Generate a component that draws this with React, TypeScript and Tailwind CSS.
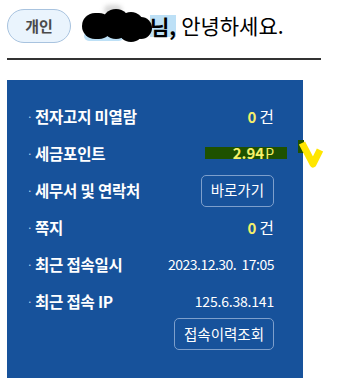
import React from 'react';

const font = { fontFamily: '"Noto Sans CJK KR", "Noto Sans", sans-serif' };

function Row({ label, children }: { label: string; children?: React.ReactNode }) {
  return (
    <div className="flex h-[37px] items-center justify-between">
      <div className="flex items-center">
        <span className="w-[8px] text-[10px] text-[#c9d6ea]">·</span>
        <span className="text-[15.5px] font-bold tracking-[-0.2px] text-white">{label}</span>
      </div>
      {children}
    </div>
  );
}

function Count({ n }: { n: string }) {
  return (
    <div className="flex items-baseline gap-[3px]">
      <span className="text-[15px] font-bold text-[#f5f06a]">{n}</span>
      <span className="text-[16px] text-white">건</span>
    </div>
  );
}

function Btn({ children }: { children: React.ReactNode }) {
  return (
    <button className="h-[32px] rounded-[5px] border border-[#7d9fcc] px-[9px] text-[14.5px] leading-none text-white">
      {children}
    </button>
  );
}

export default function App() {
  return (
    <div className="relative h-[388px] w-[351px] overflow-hidden bg-white" style={font}>
      <div className="flex items-center gap-[11px] pl-[7px] pt-[9px]">
        <div className="flex h-[34px] w-[64px] items-center justify-center rounded-full border border-[#a8c3df] bg-[#eaf4fd] text-[15px] font-bold text-[#4b4b4b]">
          개인
        </div>
        <div className="flex items-center text-[21px] text-black">
          <span className="relative inline-block h-[30px] w-[68px]">
            <span className="absolute left-[22px] top-[-6px] h-[10px] w-[18px] rounded-full bg-[#d8d8d8] blur-[2px]" />
            <span className="absolute left-[2px] top-[20px] h-[10px] w-[40px] rounded-full bg-[#bde0f6]" />
            <span className="absolute left-0 top-[2px] h-[26px] w-[30px] rounded-full bg-black" />
            <span className="absolute left-[20px] top-[-2px] h-[30px] w-[28px] rounded-full bg-black" />
            <span className="absolute left-[36px] top-[1px] h-[30px] w-[26px] rounded-full bg-black" />
            <span className="absolute left-[48px] top-[6px] h-[22px] w-[22px] rounded-full bg-black" />
          </span>
          <span className="bg-[#bde0f6] font-bold leading-[22px]">님,</span>
          <span className="ml-[5px]">안녕하세요.</span>
        </div>
      </div>
      <div className="ml-[7px] mt-[15px] h-[2px] w-[314px] bg-[#333333]" />
      <div className="ml-[7px] mt-[20px] h-[298px] w-[296px] bg-[#17529b] pl-[20px] pr-[29px] pt-[18px]">
        <Row label="전자고지 미열람">
          <Count n="0" />
        </Row>
        <Row label="세금포인트">
          <div className="relative flex items-baseline">
            <span className="absolute right-[-13px] top-[5px] h-[12px] w-[82px] bg-[#1e5100]" />
            <span className="relative text-[15px] font-bold text-[#f5f06a]">2.94</span>
            <span className="relative ml-[1px] text-[14px] text-[#f5f06a]">P</span>
          </div>
        </Row>
        <Row label="세무서 및 연락처">
          <Btn>바로가기</Btn>
        </Row>
        <Row label="쪽지">
          <Count n="0" />
        </Row>
        <Row label="최근 접속일시">
          <span className="text-[14px] tracking-[-0.5px] text-white">2023.12.30.&nbsp;&nbsp;17:05</span>
        </Row>
        <Row label="최근 접속 IP">
          <span className="text-[14px] tracking-[-0.2px] text-white">125.6.38.141</span>
        </Row>
        <div className="mt-[-2px] flex justify-end">
          <Btn>접속이력조회</Btn>
        </div>
      </div>
      <svg className="absolute left-[296px] top-[139px]" width="28" height="30" viewBox="0 0 28 30">
        <rect x="2" y="1" width="6" height="13" fill="#1e5100" />
        <path d="M6 4 L17 25 L24 11" fill="none" stroke="#ffe600" strokeWidth="7" strokeLinejoin="round" />
      </svg>
    </div>
  );
}
